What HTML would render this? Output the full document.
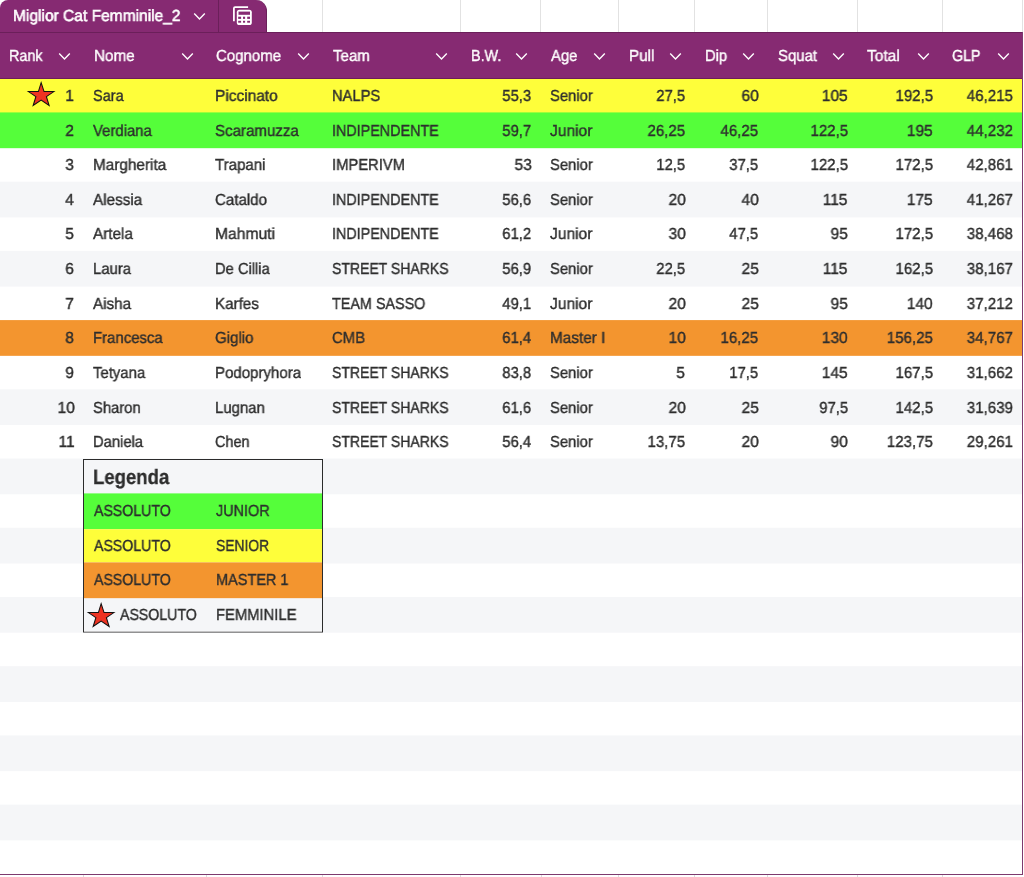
<!DOCTYPE html>
<html><head><meta charset="utf-8">
<style>
html,body{margin:0;padding:0;}
body{width:1024px;height:877px;overflow:hidden;position:relative;background:#fff;font-family:"Liberation Sans",sans-serif;}
.abs{position:absolute;}
.t{position:absolute;white-space:nowrap;line-height:20px;color:#2e2e2e;-webkit-text-stroke:0.4px currentColor;text-rendering:geometricPrecision;will-change:transform;}
.w{color:#fff;}
</style></head><body>

<div class="abs" style="left:322.0px;top:0;width:1px;height:32px;background:#e2e2e2"></div>
<div class="abs" style="left:460.0px;top:0;width:1px;height:32px;background:#e2e2e2"></div>
<div class="abs" style="left:540.0px;top:0;width:1px;height:32px;background:#e2e2e2"></div>
<div class="abs" style="left:618.0px;top:0;width:1px;height:32px;background:#e2e2e2"></div>
<div class="abs" style="left:694.0px;top:0;width:1px;height:32px;background:#e2e2e2"></div>
<div class="abs" style="left:767.0px;top:0;width:1px;height:32px;background:#e2e2e2"></div>
<div class="abs" style="left:856.5px;top:0;width:1px;height:32px;background:#e2e2e2"></div>
<div class="abs" style="left:941.5px;top:0;width:1px;height:32px;background:#e2e2e2"></div>
<div class="abs" style="left:1022px;top:0;width:1px;height:32px;background:#e2e2e2"></div>
<svg class="abs" style="left:0;top:0" width="1024" height="877"><rect x="0" y="77.82" width="1022" height="35.75" fill="#fefe3a"/><rect x="0" y="112.43" width="1022" height="35.75" fill="#55fe3a"/><rect x="0" y="181.65" width="1022" height="35.75" fill="#f5f6f8"/><rect x="0" y="250.87" width="1022" height="35.75" fill="#f5f6f8"/><rect x="0" y="320.09" width="1022" height="35.75" fill="#f3952f"/><rect x="0" y="389.31" width="1022" height="35.75" fill="#f5f6f8"/><rect x="0" y="458.53" width="1022" height="35.75" fill="#f5f6f8"/><rect x="0" y="527.75" width="1022" height="35.75" fill="#f5f6f8"/><rect x="0" y="596.97" width="1022" height="35.75" fill="#f5f6f8"/><rect x="0" y="666.19" width="1022" height="35.75" fill="#f5f6f8"/><rect x="0" y="735.41" width="1022" height="35.75" fill="#f5f6f8"/><rect x="0" y="804.63" width="1022" height="35.75" fill="#f5f6f8"/></svg>
<div class="abs" style="left:0;top:0;width:267px;height:34px;box-sizing:border-box;background:#862a72;border-right:1px solid #6b1f5a;border-radius:8px 11px 0 0"></div>
<div class="abs" style="left:218px;top:0;width:1px;height:32px;background:#6b1f5a"></div>
<div class="t" style="left:13.30px;top:7.00px;font-size:16px;color:#fff;transform:scaleX(0.9711);transform-origin:left center;-webkit-text-stroke:0.6px #fff;">Miglior Cat Femminile_2</div>
<svg class="abs" style="left:193px;top:12px" width="13" height="9" viewBox="0 0 13 9"><path d="M1.2 1.6 L6.5 6.9 L11.8 1.6" fill="none" stroke="#fff" stroke-width="1.4"/></svg>
<svg class="abs" style="left:228px;top:2px" width="30" height="28" viewBox="0 0 30 28"><path d="M5.9 19.2 V6.2 Q5.9 5.0 7.1 5.0 H20.1" fill="none" stroke="#fff" stroke-width="1.75"/><rect x="8.8" y="7.7" width="15" height="15.3" rx="2.6" fill="#fff"/><rect x="10.5" y="9.6" width="11.5" height="3.2" fill="#862a72"/><rect x="10.2" y="14.7" width="2.9" height="2.2" fill="#862a72"/><rect x="15.0" y="14.7" width="2.1" height="2.2" fill="#862a72"/><rect x="19.2" y="14.7" width="2.8" height="2.2" fill="#862a72"/><rect x="10.2" y="18.8" width="2.9" height="1.9" fill="#862a72"/><rect x="15.0" y="18.8" width="2.1" height="1.9" fill="#862a72"/><rect x="19.2" y="18.8" width="2.8" height="1.9" fill="#862a72"/></svg>
<div class="abs" style="left:0;top:32px;width:1023px;height:47px;background:#862a72;border-top:1px solid #6b1f5a;border-bottom:1px solid #6b1f5a;box-sizing:border-box"></div>
<div class="t" style="left:9.00px;top:47.00px;font-size:16px;color:#fff;transform:scaleX(0.8997);transform-origin:left center;-webkit-text-stroke:0.4px #fff;">Rank</div>
<svg class="abs" style="left:58.0px;top:52px" width="13" height="9" viewBox="0 0 13 9"><path d="M1.2 1.6 L6.5 6.9 L11.8 1.6" fill="none" stroke="#fff" stroke-width="1.4"/></svg>
<div class="t" style="left:93.50px;top:47.00px;font-size:16px;color:#fff;transform:scaleX(0.9533);transform-origin:left center;-webkit-text-stroke:0.4px #fff;">Nome</div>
<svg class="abs" style="left:180.5px;top:52px" width="13" height="9" viewBox="0 0 13 9"><path d="M1.2 1.6 L6.5 6.9 L11.8 1.6" fill="none" stroke="#fff" stroke-width="1.4"/></svg>
<div class="t" style="left:216.00px;top:47.00px;font-size:16px;color:#fff;transform:scaleX(0.9375);transform-origin:left center;-webkit-text-stroke:0.4px #fff;">Cognome</div>
<svg class="abs" style="left:297.0px;top:52px" width="13" height="9" viewBox="0 0 13 9"><path d="M1.2 1.6 L6.5 6.9 L11.8 1.6" fill="none" stroke="#fff" stroke-width="1.4"/></svg>
<div class="t" style="left:332.50px;top:47.00px;font-size:16px;color:#fff;transform:scaleX(0.9415);transform-origin:left center;-webkit-text-stroke:0.4px #fff;">Team</div>
<svg class="abs" style="left:435.0px;top:52px" width="13" height="9" viewBox="0 0 13 9"><path d="M1.2 1.6 L6.5 6.9 L11.8 1.6" fill="none" stroke="#fff" stroke-width="1.4"/></svg>
<div class="t" style="left:470.50px;top:47.00px;font-size:16px;color:#fff;transform:scaleX(0.8994);transform-origin:left center;-webkit-text-stroke:0.4px #fff;">B.W.</div>
<svg class="abs" style="left:515.0px;top:52px" width="13" height="9" viewBox="0 0 13 9"><path d="M1.2 1.6 L6.5 6.9 L11.8 1.6" fill="none" stroke="#fff" stroke-width="1.4"/></svg>
<div class="t" style="left:550.50px;top:47.00px;font-size:16px;color:#fff;transform:scaleX(0.9282);transform-origin:left center;-webkit-text-stroke:0.4px #fff;">Age</div>
<svg class="abs" style="left:593.0px;top:52px" width="13" height="9" viewBox="0 0 13 9"><path d="M1.2 1.6 L6.5 6.9 L11.8 1.6" fill="none" stroke="#fff" stroke-width="1.4"/></svg>
<div class="t" style="left:628.50px;top:47.00px;font-size:16px;color:#fff;transform:scaleX(0.9498);transform-origin:left center;-webkit-text-stroke:0.4px #fff;">Pull</div>
<svg class="abs" style="left:669.0px;top:52px" width="13" height="9" viewBox="0 0 13 9"><path d="M1.2 1.6 L6.5 6.9 L11.8 1.6" fill="none" stroke="#fff" stroke-width="1.4"/></svg>
<div class="t" style="left:704.50px;top:47.00px;font-size:16px;color:#fff;transform:scaleX(0.9240);transform-origin:left center;-webkit-text-stroke:0.4px #fff;">Dip</div>
<svg class="abs" style="left:742.0px;top:52px" width="13" height="9" viewBox="0 0 13 9"><path d="M1.2 1.6 L6.5 6.9 L11.8 1.6" fill="none" stroke="#fff" stroke-width="1.4"/></svg>
<div class="t" style="left:777.50px;top:47.00px;font-size:16px;color:#fff;transform:scaleX(0.9346);transform-origin:left center;-webkit-text-stroke:0.4px #fff;">Squat</div>
<svg class="abs" style="left:831.5px;top:52px" width="13" height="9" viewBox="0 0 13 9"><path d="M1.2 1.6 L6.5 6.9 L11.8 1.6" fill="none" stroke="#fff" stroke-width="1.4"/></svg>
<div class="t" style="left:867.00px;top:47.00px;font-size:16px;color:#fff;transform:scaleX(0.9703);transform-origin:left center;-webkit-text-stroke:0.4px #fff;">Total</div>
<svg class="abs" style="left:916.5px;top:52px" width="13" height="9" viewBox="0 0 13 9"><path d="M1.2 1.6 L6.5 6.9 L11.8 1.6" fill="none" stroke="#fff" stroke-width="1.4"/></svg>
<div class="t" style="left:952.00px;top:47.00px;font-size:16px;color:#fff;transform:scaleX(0.8897);transform-origin:left center;-webkit-text-stroke:0.4px #fff;">GLP</div>
<svg class="abs" style="left:996.5px;top:52px" width="13" height="9" viewBox="0 0 13 9"><path d="M1.2 1.6 L6.5 6.9 L11.8 1.6" fill="none" stroke="#fff" stroke-width="1.4"/></svg>
<div class="t" style="right:949.70px;top:87.00px;font-size:16px;transform:scaleX(0.9718);transform-origin:right center;">1</div>
<div class="t" style="left:92.70px;top:87.00px;font-size:16px;transform:scaleX(0.9058);transform-origin:left center;">Sara</div>
<div class="t" style="left:215.20px;top:87.00px;font-size:16px;transform:scaleX(0.9664);transform-origin:left center;">Piccinato</div>
<div class="t" style="left:331.70px;top:87.00px;font-size:16px;transform:scaleX(0.9182);transform-origin:left center;">NALPS</div>
<div class="t" style="right:492.70px;top:87.00px;font-size:16px;transform:scaleX(0.9280);transform-origin:right center;">55,3</div>
<div class="t" style="left:549.70px;top:87.00px;font-size:16px;transform:scaleX(0.9243);transform-origin:left center;">Senior</div>
<div class="t" style="right:338.70px;top:87.00px;font-size:16px;transform:scaleX(0.9280);transform-origin:right center;">27,5</div>
<div class="t" style="right:265.70px;top:87.00px;font-size:16px;transform:scaleX(0.9718);transform-origin:right center;">60</div>
<div class="t" style="right:176.20px;top:87.00px;font-size:16px;transform:scaleX(0.9718);transform-origin:right center;">105</div>
<div class="t" style="right:91.20px;top:87.00px;font-size:16px;transform:scaleX(0.9377);transform-origin:right center;">192,5</div>
<div class="t" style="right:11.20px;top:87.00px;font-size:16px;transform:scaleX(0.9439);transform-origin:right center;">46,215</div>
<svg class="abs" style="left:20px;top:75px" width="40" height="40" viewBox="0 0 40 40"><path d="M21.14 7.66 L24.05 16.56 L33.85 16.56 L26.40 21.65 L29.13 30.55 L21.14 25.10 L13.15 30.55 L15.88 21.65 L8.43 16.56 L18.41 16.56 Z" fill="#ee3322" stroke="#111" stroke-width="1.05" stroke-linejoin="miter"/></svg>
<div class="t" style="right:949.70px;top:122.00px;font-size:16px;transform:scaleX(0.9718);transform-origin:right center;">2</div>
<div class="t" style="left:92.70px;top:122.00px;font-size:16px;transform:scaleX(0.9314);transform-origin:left center;">Verdiana</div>
<div class="t" style="left:215.20px;top:122.00px;font-size:16px;transform:scaleX(0.9424);transform-origin:left center;">Scaramuzza</div>
<div class="t" style="left:331.70px;top:122.00px;font-size:16px;transform:scaleX(0.8954);transform-origin:left center;">INDIPENDENTE</div>
<div class="t" style="right:492.70px;top:122.00px;font-size:16px;transform:scaleX(0.9280);transform-origin:right center;">59,7</div>
<div class="t" style="left:549.70px;top:122.00px;font-size:16px;transform:scaleX(0.9739);transform-origin:left center;">Junior</div>
<div class="t" style="right:338.70px;top:122.00px;font-size:16px;transform:scaleX(0.9377);transform-origin:right center;">26,25</div>
<div class="t" style="right:265.70px;top:122.00px;font-size:16px;transform:scaleX(0.9377);transform-origin:right center;">46,25</div>
<div class="t" style="right:176.20px;top:122.00px;font-size:16px;transform:scaleX(0.9377);transform-origin:right center;">122,5</div>
<div class="t" style="right:91.20px;top:122.00px;font-size:16px;transform:scaleX(0.9718);transform-origin:right center;">195</div>
<div class="t" style="right:11.20px;top:122.00px;font-size:16px;transform:scaleX(0.9439);transform-origin:right center;">44,232</div>
<div class="t" style="right:949.70px;top:156.00px;font-size:16px;transform:scaleX(0.9718);transform-origin:right center;">3</div>
<div class="t" style="left:92.70px;top:156.00px;font-size:16px;transform:scaleX(0.9581);transform-origin:left center;">Margherita</div>
<div class="t" style="left:215.20px;top:156.00px;font-size:16px;transform:scaleX(0.9409);transform-origin:left center;">Trapani</div>
<div class="t" style="left:331.70px;top:156.00px;font-size:16px;transform:scaleX(0.9228);transform-origin:left center;">IMPERIVM</div>
<div class="t" style="right:492.70px;top:156.00px;font-size:16px;transform:scaleX(0.9718);transform-origin:right center;">53</div>
<div class="t" style="left:549.70px;top:156.00px;font-size:16px;transform:scaleX(0.9243);transform-origin:left center;">Senior</div>
<div class="t" style="right:338.70px;top:156.00px;font-size:16px;transform:scaleX(0.9280);transform-origin:right center;">12,5</div>
<div class="t" style="right:265.70px;top:156.00px;font-size:16px;transform:scaleX(0.9280);transform-origin:right center;">37,5</div>
<div class="t" style="right:176.20px;top:156.00px;font-size:16px;transform:scaleX(0.9377);transform-origin:right center;">122,5</div>
<div class="t" style="right:91.20px;top:156.00px;font-size:16px;transform:scaleX(0.9377);transform-origin:right center;">172,5</div>
<div class="t" style="right:11.20px;top:156.00px;font-size:16px;transform:scaleX(0.9439);transform-origin:right center;">42,861</div>
<div class="t" style="right:949.70px;top:191.00px;font-size:16px;transform:scaleX(0.9718);transform-origin:right center;">4</div>
<div class="t" style="left:92.70px;top:191.00px;font-size:16px;transform:scaleX(0.9514);transform-origin:left center;">Alessia</div>
<div class="t" style="left:215.20px;top:191.00px;font-size:16px;transform:scaleX(0.9430);transform-origin:left center;">Cataldo</div>
<div class="t" style="left:331.70px;top:191.00px;font-size:16px;transform:scaleX(0.8954);transform-origin:left center;">INDIPENDENTE</div>
<div class="t" style="right:492.70px;top:191.00px;font-size:16px;transform:scaleX(0.9280);transform-origin:right center;">56,6</div>
<div class="t" style="left:549.70px;top:191.00px;font-size:16px;transform:scaleX(0.9243);transform-origin:left center;">Senior</div>
<div class="t" style="right:338.70px;top:191.00px;font-size:16px;transform:scaleX(0.9718);transform-origin:right center;">20</div>
<div class="t" style="right:265.70px;top:191.00px;font-size:16px;transform:scaleX(0.9718);transform-origin:right center;">40</div>
<div class="t" style="right:176.20px;top:191.00px;font-size:16px;transform:scaleX(0.9718);transform-origin:right center;">115</div>
<div class="t" style="right:91.20px;top:191.00px;font-size:16px;transform:scaleX(0.9718);transform-origin:right center;">175</div>
<div class="t" style="right:11.20px;top:191.00px;font-size:16px;transform:scaleX(0.9439);transform-origin:right center;">41,267</div>
<div class="t" style="right:949.70px;top:225.00px;font-size:16px;transform:scaleX(0.9718);transform-origin:right center;">5</div>
<div class="t" style="left:92.70px;top:225.00px;font-size:16px;transform:scaleX(0.9539);transform-origin:left center;">Artela</div>
<div class="t" style="left:215.20px;top:225.00px;font-size:16px;transform:scaleX(0.9781);transform-origin:left center;">Mahmuti</div>
<div class="t" style="left:331.70px;top:225.00px;font-size:16px;transform:scaleX(0.8954);transform-origin:left center;">INDIPENDENTE</div>
<div class="t" style="right:492.70px;top:225.00px;font-size:16px;transform:scaleX(0.9280);transform-origin:right center;">61,2</div>
<div class="t" style="left:549.70px;top:225.00px;font-size:16px;transform:scaleX(0.9739);transform-origin:left center;">Junior</div>
<div class="t" style="right:338.70px;top:225.00px;font-size:16px;transform:scaleX(0.9718);transform-origin:right center;">30</div>
<div class="t" style="right:265.70px;top:225.00px;font-size:16px;transform:scaleX(0.9280);transform-origin:right center;">47,5</div>
<div class="t" style="right:176.20px;top:225.00px;font-size:16px;transform:scaleX(0.9718);transform-origin:right center;">95</div>
<div class="t" style="right:91.20px;top:225.00px;font-size:16px;transform:scaleX(0.9377);transform-origin:right center;">172,5</div>
<div class="t" style="right:11.20px;top:225.00px;font-size:16px;transform:scaleX(0.9439);transform-origin:right center;">38,468</div>
<div class="t" style="right:949.70px;top:260.00px;font-size:16px;transform:scaleX(0.9718);transform-origin:right center;">6</div>
<div class="t" style="left:92.70px;top:260.00px;font-size:16px;transform:scaleX(0.9298);transform-origin:left center;">Laura</div>
<div class="t" style="left:215.20px;top:260.00px;font-size:16px;transform:scaleX(0.9186);transform-origin:left center;">De Cillia</div>
<div class="t" style="left:331.70px;top:260.00px;font-size:16px;transform:scaleX(0.8756);transform-origin:left center;">STREET SHARKS</div>
<div class="t" style="right:492.70px;top:260.00px;font-size:16px;transform:scaleX(0.9280);transform-origin:right center;">56,9</div>
<div class="t" style="left:549.70px;top:260.00px;font-size:16px;transform:scaleX(0.9243);transform-origin:left center;">Senior</div>
<div class="t" style="right:338.70px;top:260.00px;font-size:16px;transform:scaleX(0.9280);transform-origin:right center;">22,5</div>
<div class="t" style="right:265.70px;top:260.00px;font-size:16px;transform:scaleX(0.9718);transform-origin:right center;">25</div>
<div class="t" style="right:176.20px;top:260.00px;font-size:16px;transform:scaleX(0.9718);transform-origin:right center;">115</div>
<div class="t" style="right:91.20px;top:260.00px;font-size:16px;transform:scaleX(0.9377);transform-origin:right center;">162,5</div>
<div class="t" style="right:11.20px;top:260.00px;font-size:16px;transform:scaleX(0.9439);transform-origin:right center;">38,167</div>
<div class="t" style="right:949.70px;top:295.00px;font-size:16px;transform:scaleX(0.9718);transform-origin:right center;">7</div>
<div class="t" style="left:92.70px;top:295.00px;font-size:16px;transform:scaleX(0.9488);transform-origin:left center;">Aisha</div>
<div class="t" style="left:215.20px;top:295.00px;font-size:16px;transform:scaleX(0.9488);transform-origin:left center;">Karfes</div>
<div class="t" style="left:331.70px;top:295.00px;font-size:16px;transform:scaleX(0.8972);transform-origin:left center;">TEAM SASSO</div>
<div class="t" style="right:492.70px;top:295.00px;font-size:16px;transform:scaleX(0.9280);transform-origin:right center;">49,1</div>
<div class="t" style="left:549.70px;top:295.00px;font-size:16px;transform:scaleX(0.9739);transform-origin:left center;">Junior</div>
<div class="t" style="right:338.70px;top:295.00px;font-size:16px;transform:scaleX(0.9718);transform-origin:right center;">20</div>
<div class="t" style="right:265.70px;top:295.00px;font-size:16px;transform:scaleX(0.9718);transform-origin:right center;">25</div>
<div class="t" style="right:176.20px;top:295.00px;font-size:16px;transform:scaleX(0.9718);transform-origin:right center;">95</div>
<div class="t" style="right:91.20px;top:295.00px;font-size:16px;transform:scaleX(0.9718);transform-origin:right center;">140</div>
<div class="t" style="right:11.20px;top:295.00px;font-size:16px;transform:scaleX(0.9439);transform-origin:right center;">37,212</div>
<div class="t" style="right:949.70px;top:329.00px;font-size:16px;transform:scaleX(0.9718);transform-origin:right center;">8</div>
<div class="t" style="left:92.70px;top:329.00px;font-size:16px;transform:scaleX(0.9337);transform-origin:left center;">Francesca</div>
<div class="t" style="left:215.20px;top:329.00px;font-size:16px;transform:scaleX(0.9401);transform-origin:left center;">Giglio</div>
<div class="t" style="left:331.70px;top:329.00px;font-size:16px;transform:scaleX(0.9297);transform-origin:left center;">CMB</div>
<div class="t" style="right:492.70px;top:329.00px;font-size:16px;transform:scaleX(0.9280);transform-origin:right center;">61,4</div>
<div class="t" style="left:549.70px;top:329.00px;font-size:16px;transform:scaleX(0.9585);transform-origin:left center;">Master I</div>
<div class="t" style="right:338.70px;top:329.00px;font-size:16px;transform:scaleX(0.9718);transform-origin:right center;">10</div>
<div class="t" style="right:265.70px;top:329.00px;font-size:16px;transform:scaleX(0.9377);transform-origin:right center;">16,25</div>
<div class="t" style="right:176.20px;top:329.00px;font-size:16px;transform:scaleX(0.9718);transform-origin:right center;">130</div>
<div class="t" style="right:91.20px;top:329.00px;font-size:16px;transform:scaleX(0.9439);transform-origin:right center;">156,25</div>
<div class="t" style="right:11.20px;top:329.00px;font-size:16px;transform:scaleX(0.9439);transform-origin:right center;">34,767</div>
<div class="t" style="right:949.70px;top:364.00px;font-size:16px;transform:scaleX(0.9718);transform-origin:right center;">9</div>
<div class="t" style="left:92.70px;top:364.00px;font-size:16px;transform:scaleX(0.9317);transform-origin:left center;">Tetyana</div>
<div class="t" style="left:215.20px;top:364.00px;font-size:16px;transform:scaleX(0.9398);transform-origin:left center;">Podopryhora</div>
<div class="t" style="left:331.70px;top:364.00px;font-size:16px;transform:scaleX(0.8756);transform-origin:left center;">STREET SHARKS</div>
<div class="t" style="right:492.70px;top:364.00px;font-size:16px;transform:scaleX(0.9280);transform-origin:right center;">83,8</div>
<div class="t" style="left:549.70px;top:364.00px;font-size:16px;transform:scaleX(0.9243);transform-origin:left center;">Senior</div>
<div class="t" style="right:338.70px;top:364.00px;font-size:16px;transform:scaleX(0.9718);transform-origin:right center;">5</div>
<div class="t" style="right:265.70px;top:364.00px;font-size:16px;transform:scaleX(0.9280);transform-origin:right center;">17,5</div>
<div class="t" style="right:176.20px;top:364.00px;font-size:16px;transform:scaleX(0.9718);transform-origin:right center;">145</div>
<div class="t" style="right:91.20px;top:364.00px;font-size:16px;transform:scaleX(0.9377);transform-origin:right center;">167,5</div>
<div class="t" style="right:11.20px;top:364.00px;font-size:16px;transform:scaleX(0.9439);transform-origin:right center;">31,662</div>
<div class="t" style="right:949.70px;top:399.00px;font-size:16px;transform:scaleX(0.9718);transform-origin:right center;">10</div>
<div class="t" style="left:92.70px;top:399.00px;font-size:16px;transform:scaleX(0.9229);transform-origin:left center;">Sharon</div>
<div class="t" style="left:215.20px;top:399.00px;font-size:16px;transform:scaleX(0.9332);transform-origin:left center;">Lugnan</div>
<div class="t" style="left:331.70px;top:399.00px;font-size:16px;transform:scaleX(0.8756);transform-origin:left center;">STREET SHARKS</div>
<div class="t" style="right:492.70px;top:399.00px;font-size:16px;transform:scaleX(0.9280);transform-origin:right center;">61,6</div>
<div class="t" style="left:549.70px;top:399.00px;font-size:16px;transform:scaleX(0.9243);transform-origin:left center;">Senior</div>
<div class="t" style="right:338.70px;top:399.00px;font-size:16px;transform:scaleX(0.9718);transform-origin:right center;">20</div>
<div class="t" style="right:265.70px;top:399.00px;font-size:16px;transform:scaleX(0.9718);transform-origin:right center;">25</div>
<div class="t" style="right:176.20px;top:399.00px;font-size:16px;transform:scaleX(0.9280);transform-origin:right center;">97,5</div>
<div class="t" style="right:91.20px;top:399.00px;font-size:16px;transform:scaleX(0.9377);transform-origin:right center;">142,5</div>
<div class="t" style="right:11.20px;top:399.00px;font-size:16px;transform:scaleX(0.9439);transform-origin:right center;">31,639</div>
<div class="t" style="right:949.70px;top:433.00px;font-size:16px;transform:scaleX(0.9718);transform-origin:right center;">11</div>
<div class="t" style="left:92.70px;top:433.00px;font-size:16px;transform:scaleX(0.9226);transform-origin:left center;">Daniela</div>
<div class="t" style="left:215.20px;top:433.00px;font-size:16px;transform:scaleX(0.9045);transform-origin:left center;">Chen</div>
<div class="t" style="left:331.70px;top:433.00px;font-size:16px;transform:scaleX(0.8756);transform-origin:left center;">STREET SHARKS</div>
<div class="t" style="right:492.70px;top:433.00px;font-size:16px;transform:scaleX(0.9280);transform-origin:right center;">56,4</div>
<div class="t" style="left:549.70px;top:433.00px;font-size:16px;transform:scaleX(0.9243);transform-origin:left center;">Senior</div>
<div class="t" style="right:338.70px;top:433.00px;font-size:16px;transform:scaleX(0.9377);transform-origin:right center;">13,75</div>
<div class="t" style="right:265.70px;top:433.00px;font-size:16px;transform:scaleX(0.9718);transform-origin:right center;">20</div>
<div class="t" style="right:176.20px;top:433.00px;font-size:16px;transform:scaleX(0.9718);transform-origin:right center;">90</div>
<div class="t" style="right:91.20px;top:433.00px;font-size:16px;transform:scaleX(0.9439);transform-origin:right center;">123,75</div>
<div class="t" style="right:11.20px;top:433.00px;font-size:16px;transform:scaleX(0.9439);transform-origin:right center;">29,261</div>
<svg class="abs" style="left:0;top:0" width="1024" height="877"><rect x="83.5" y="459.5" width="239" height="172.5" fill="#f5f6f8" stroke="#2b2b2b" stroke-width="1"/><rect x="84" y="493.4" width="238" height="35.80" fill="#55fe3a"/><rect x="84" y="529.2" width="238" height="33.20" fill="#fefe3a"/><rect x="84" y="562.4" width="238" height="36.00" fill="#f3952f"/><rect x="84" y="598.4" width="238" height="33.10" fill="#f5f6f8"/></svg>
<div class="t" style="left:93.40px;top:468.00px;font-size:20.8px;font-weight:bold;transform:scaleX(0.8910);transform-origin:left center;-webkit-text-stroke:0.3px currentColor;">Legenda</div>
<div class="t" style="left:94.00px;top:502.00px;font-size:16px;transform:scaleX(0.8834);transform-origin:left center;">ASSOLUTO</div>
<div class="t" style="left:216.00px;top:502.00px;font-size:16px;transform:scaleX(0.9019);transform-origin:left center;">JUNIOR</div>
<div class="t" style="left:94.00px;top:537.00px;font-size:16px;transform:scaleX(0.8834);transform-origin:left center;">ASSOLUTO</div>
<div class="t" style="left:216.00px;top:537.00px;font-size:16px;transform:scaleX(0.8663);transform-origin:left center;">SENIOR</div>
<div class="t" style="left:94.00px;top:571.00px;font-size:16px;transform:scaleX(0.8834);transform-origin:left center;">ASSOLUTO</div>
<div class="t" style="left:216.00px;top:571.00px;font-size:16px;transform:scaleX(0.9063);transform-origin:left center;">MASTER 1</div>
<div class="t" style="left:120.00px;top:606.00px;font-size:16px;transform:scaleX(0.8834);transform-origin:left center;">ASSOLUTO</div>
<div class="t" style="left:216.00px;top:606.00px;font-size:16px;transform:scaleX(0.9246);transform-origin:left center;">FEMMINILE</div>
<svg class="abs" style="left:80.0px;top:595.9px" width="40" height="40" viewBox="0 0 40 40"><path d="M21.14 7.66 L24.05 16.56 L33.85 16.56 L26.40 21.65 L29.13 30.55 L21.14 25.10 L13.15 30.55 L15.88 21.65 L8.43 16.56 L18.41 16.56 Z" fill="#ee3322" stroke="#111" stroke-width="1.05" stroke-linejoin="miter"/></svg>
<div class="abs" style="left:1022px;top:32px;width:1px;height:843px;background:#7d3a6e"></div>
<div class="abs" style="left:0;top:874px;width:1023px;height:1px;background:#7d3a6e"></div>
<div class="abs" style="left:83px;top:875px;width:1px;height:2px;background:#dcdcdc"></div>
<div class="abs" style="left:205.5px;top:875px;width:1px;height:2px;background:#dcdcdc"></div>
<div class="abs" style="left:322px;top:875px;width:1px;height:2px;background:#dcdcdc"></div>
<div class="abs" style="left:460px;top:875px;width:1px;height:2px;background:#dcdcdc"></div>
<div class="abs" style="left:540.5px;top:875px;width:1px;height:2px;background:#dcdcdc"></div>
<div class="abs" style="left:618px;top:875px;width:1px;height:2px;background:#dcdcdc"></div>
<div class="abs" style="left:694px;top:875px;width:1px;height:2px;background:#dcdcdc"></div>
<div class="abs" style="left:767px;top:875px;width:1px;height:2px;background:#dcdcdc"></div>
<div class="abs" style="left:856.5px;top:875px;width:1px;height:2px;background:#dcdcdc"></div>
<div class="abs" style="left:941.5px;top:875px;width:1px;height:2px;background:#dcdcdc"></div>
</body></html>
